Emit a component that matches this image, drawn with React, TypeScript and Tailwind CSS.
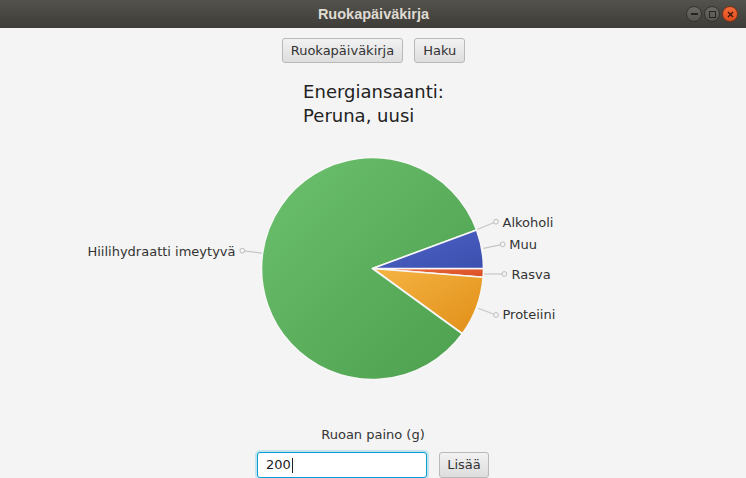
import React from "react";

const CX = 372.5;
const CY = 140.5;
const R = 111;

function pt(deg: number, r = R) {
  const a = (deg * Math.PI) / 180;
  return [CX + r * Math.cos(a), CY - r * Math.sin(a)];
}

// slice drawn counterclockwise from a0 to a1 (degrees, math convention)
function slice(a0: number, a1: number) {
  const [x0, y0] = pt(a0);
  const [x1, y1] = pt(a1);
  const large = a1 - a0 > 180 ? 1 : 0;
  return `M${CX},${CY} L${x0},${y0} A${R},${R} 0 ${large} 0 ${x1},${y1} Z`;
}

const slices = [
  { id: "rasva", from: -4.5, to: 0, light: "#ef6a3c", dark: "#d64d22" },
  { id: "proteiini", from: -36, to: -4.5, light: "#f6b443", dark: "#e08f18" },
  { id: "hiili", from: 20.3, to: 324, light: "#6cc16e", dark: "#4c9f4c" },
  { id: "muu", from: 0, to: 20.3, light: "#5064c6", dark: "#3a4fae" },
];

const labels = [
  { text: "Alkoholi", line: [476, 102, 496, 93.7], tx: 502.5, ty: 98.5, end: false },
  { text: "Muu", line: [483.3, 120.3, 502.7, 116.3], tx: 509.3, ty: 121.3, end: false },
  { text: "Rasva", line: [484, 146, 504.3, 146], tx: 511.5, ty: 150.5, end: false },
  { text: "Proteiini", line: [478.3, 180.3, 496, 187], tx: 502.5, ty: 191, end: false },
  { text: "Hiilihydraatti imeytyvä", line: [263.3, 125.3, 242.3, 122.7], tx: 235.5, ty: 127.7, end: true },
];

function WinButton({ close, children }: { close?: boolean; children: React.ReactNode }) {
  return (
    <div
      className={
        close
          ? "w-[16px] h-[16px] rounded-full bg-gradient-to-b from-[#f36a38] to-[#df4d1c] border border-[#7d3318] flex items-center justify-center"
          : "w-[16px] h-[16px] rounded-full bg-gradient-to-b from-[#6c6a64] to-[#56544f] border border-[#33322e] flex items-center justify-center"
      }
    >
      {children}
    </div>
  );
}

export default function App() {
  const font = { fontFamily: '"DejaVu Sans", sans-serif' };

  return (
    <div className="w-[746px] h-[478px] overflow-hidden bg-[#f4f4f4] flex flex-col" style={font}>
      {/* TITLE BAR */}
      <div className="h-[28px] shrink-0 bg-gradient-to-b from-[#54524c] to-[#3d3c38] relative flex items-center justify-center">
        <span
          className="text-[14.5px] font-bold text-[#dfdbd2] leading-none pl-[1px]"
          style={{ fontFamily: '"Liberation Sans", sans-serif' }}
        >
          Ruokapäiväkirja
        </span>
        <div className="absolute right-[8px] top-[6px] flex gap-[2px]">
          <WinButton>
            <div className="w-[7px] h-[1.5px] bg-[#26251f]" />
          </WinButton>
          <WinButton>
            <div className="w-[7px] h-[7px] border border-[#26251f]" />
          </WinButton>
          <WinButton close>
            <svg width="7" height="7" viewBox="0 0 7 7">
              <path d="M1 1 L6 6 M6 1 L1 6" stroke="#3a1408" strokeWidth="1.3" />
            </svg>
          </WinButton>
        </div>
      </div>

      {/* NAV BUTTONS */}
      <div className="mt-[10px] flex justify-center gap-[11px] pl-[1px]">
        <button className="h-[25px] px-[8px] rounded-[3px] border border-[#b9b9b9] bg-gradient-to-b from-[#f2f2f2] to-[#dddddd] text-[13px] text-[#333]">
          Ruokapäiväkirja
        </button>
        <button className="h-[25px] px-[8px] rounded-[3px] border border-[#b9b9b9] bg-gradient-to-b from-[#f2f2f2] to-[#dddddd] text-[13px] text-[#333]">
          Haku
        </button>
      </div>

      {/* CHART TITLE */}
      <div className="mt-[17px] flex justify-center">
        <div className="text-[18px] leading-[24px] text-[#222] pl-[1px]">
          <div>Energiansaanti:</div>
          <div>Peruna, uusi</div>
        </div>
      </div>

      {/* PIE */}
      <svg width="746" height="299" className="shrink-0">
        <defs>
          {slices.map((s) => (
            <linearGradient key={s.id} id={`g-${s.id}`} x1="0" y1="0" x2="1" y2="1">
              <stop offset="0%" stopColor={s.light} />
              <stop offset="100%" stopColor={s.dark} />
            </linearGradient>
          ))}
        </defs>
        {labels.map((l) => (
          <g key={l.text}>
            <line x1={l.line[0]} y1={l.line[1]} x2={l.line[2]} y2={l.line[3]} stroke="#c6c6c6" strokeWidth="1.2" />
            <circle cx={l.line[2]} cy={l.line[3]} r="2.4" fill="#f4f4f4" stroke="#bdbdbd" strokeWidth="1" />
            <text
              x={l.tx}
              y={l.ty}
              fontSize="13"
              fill="#333"
              textAnchor={l.end ? "end" : "start"}
              style={font}
            >
              {l.text}
            </text>
          </g>
        ))}
        {slices.map((s) => (
          <path key={s.id} d={slice(s.from, s.to)} fill={`url(#g-${s.id})`} stroke="#f7f7f7" strokeWidth="1.6" strokeLinejoin="round" />
        ))}
      </svg>

      {/* INPUT */}
      <div className="text-center text-[13px] leading-[16px] text-[#333]">Ruoan paino (g)</div>
      <div className="mt-[9px] flex justify-center gap-[12px]">
        <div className="w-[170px] h-[26px] rounded-[3px] border border-[#039ed3] ring-2 ring-[#039ed3]/20 bg-white flex items-center pl-[8px] text-[13px] text-[#222]">
          200
          <span className="w-[1px] h-[15px] bg-[#222] ml-[1px]" />
        </div>
        <button className="w-[50px] h-[26px] rounded-[3px] border border-[#b9b9b9] bg-gradient-to-b from-[#f2f2f2] to-[#dddddd] text-[13px] text-[#333]">
          Lisää
        </button>
      </div>
    </div>
  );
}
